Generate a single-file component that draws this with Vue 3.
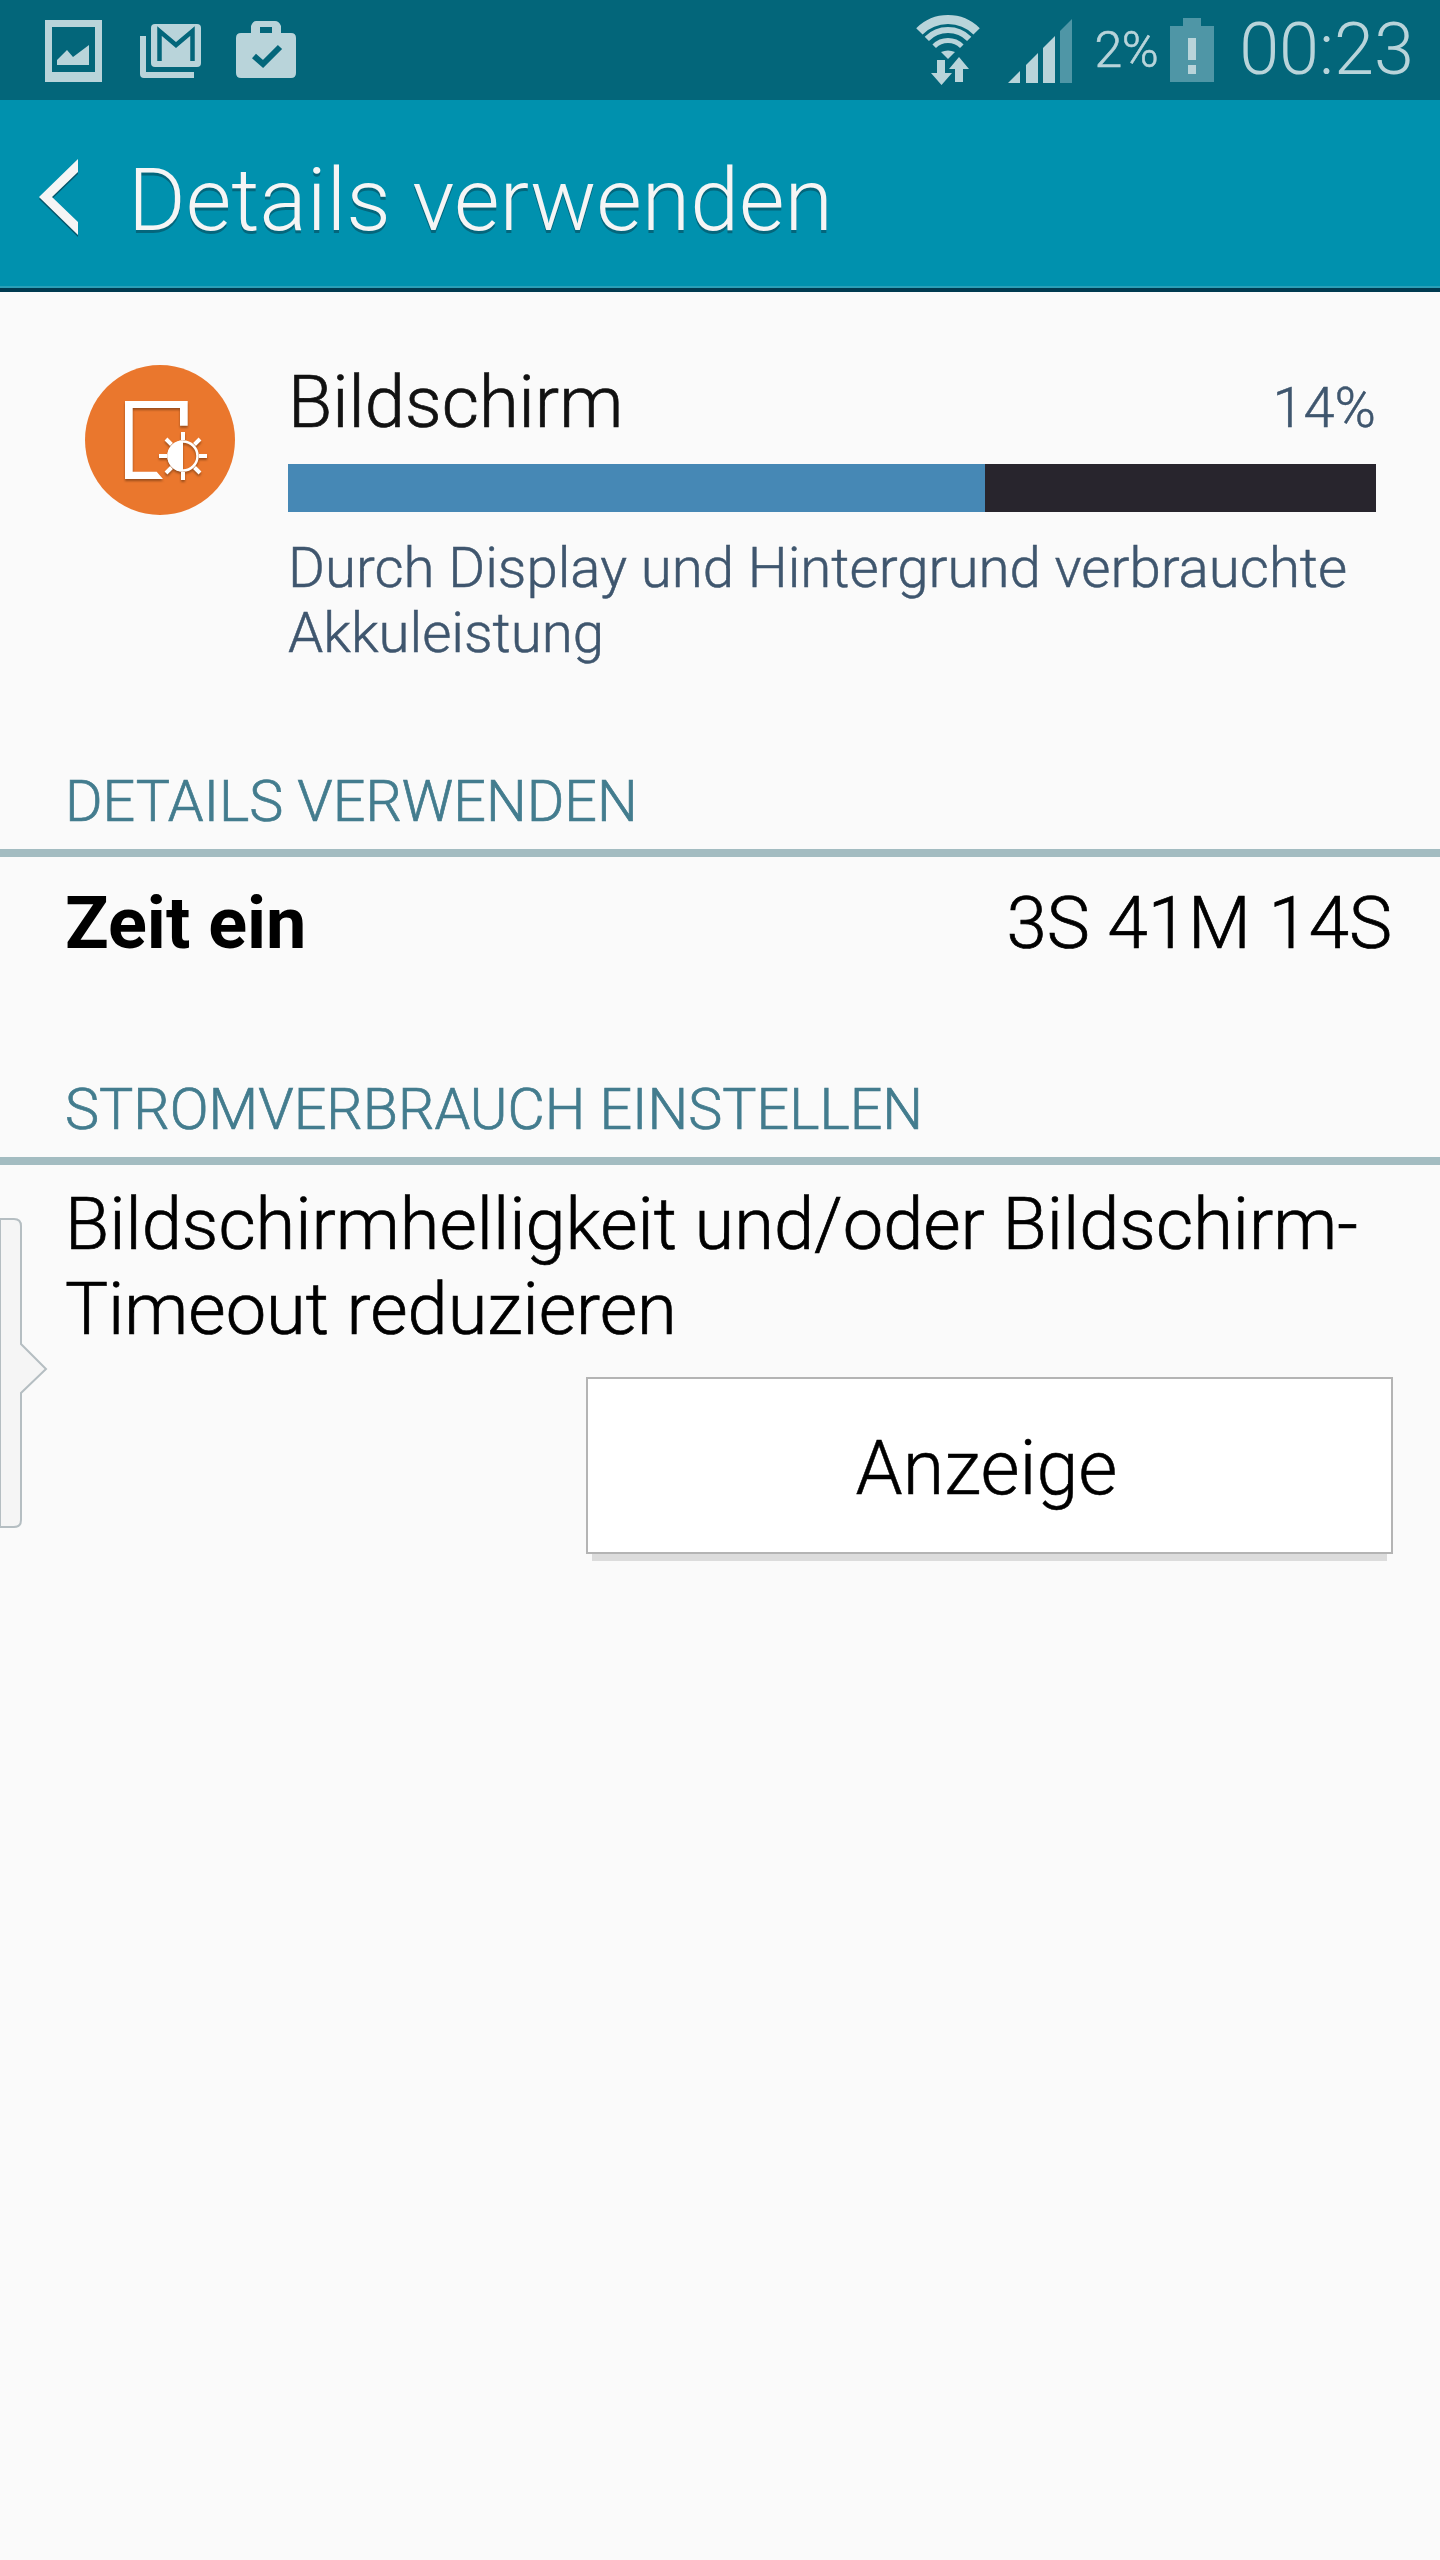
<template>
  <div class="screen">
    <!-- status bar -->
    <header class="statusbar">
      <div class="status-left">
        <svg class="ic" width="57" height="62" viewBox="45 20 57 62">
          <path fill-rule="evenodd" d="M45 20h57v62H45zM52 27v45h43V27z" />
          <path d="M57 60l10-10 6 7 16-12v20H57z" />
        </svg>
        <svg class="ic ic-mail" width="61" height="55" viewBox="140 23 61 55">
          <path d="M140 36h6v36h48v6h-50q-4 0-4-4z" />
          <rect x="151" y="24" width="50" height="43" rx="4" />
          <path class="cut" d="M159.500 61V31l16.500 14 16.500-14v30" />
        </svg>
        <svg class="ic ic-case" width="60" height="58" viewBox="236 21 60 58">
          <path fill-rule="evenodd" d="M256 21h19q4 0 6 5v7h10q5 0 5 5v35q0 5-5 5h-50q-5 0-5-5V38q0-5 5-5h10v-7q2-5 5-5zM260 27v6h12v-6z" />
          <path class="cut" d="M254 56l9 8 17-17" />
        </svg>
      </div>
      <div class="status-right">
        <svg class="ic ic-wifi" width="66" height="71" viewBox="916 15 66 71">
          <path class="arc" stroke-width="9" d="M920.400 31.400a40.500 40.500 0 0 1 57.200 0" />
          <path class="arc" stroke-width="6" d="M927.800 38.800a30 30 0 0 1 42.400 0" />
          <path class="arc" stroke-width="5" d="M935.200 46.200a19.500 19.500 0 0 1 27.600 0" />
          <path d="M942 52q7-3 14 0l-7 7z" />
          <path d="M938 60h8v13h7l-10.500 12L932 73h6z" />
          <path d="M960 57l10 12h-6v13h-8V69h-6z" />
        </svg>
        <svg class="ic ic-signal" width="64" height="64" viewBox="1009 19 64 64">
          <path d="M1009 83l12-12v12z" />
          <path d="M1027 83V65l12-12v30z" />
          <path d="M1044 83V48l12-12v47z" />
          <path class="dim" d="M1061 83V31l12-12v64z" />
        </svg>
        <span class="pct">2%</span>
        <svg class="ic ic-batt" width="44" height="64" viewBox="1171 18 44 64">
          <path class="dim" d="M1184 18h18v8h13v56h-44V26h13z" />
          <path d="M1189 38h8v22h-8zM1189 65h8v9h-8z" />
        </svg>
        <span class="clock">00:23</span>
      </div>
    </header>

    <!-- app bar -->
    <div class="appbar">
      <svg class="back" width="42" height="80" viewBox="0 0 42 80">
        <path d="M40 0v13L14 38l26 25v13L1 38z" />
      </svg>
      <h1 class="appbar-title">Details verwenden</h1>
    </div>

    <main class="content">
      <section class="summary">
        <div class="circle">
          <svg width="150" height="150" viewBox="85 365 150 150">
            <g class="glyph">
              <path d="M125 401h62.700v24.700H180V408h-47.300v63.700h24l6.300 7.300h-38z" />
              <path d="M183 456m0-15.500a15.500 15.500 0 0 0 0 31z" />
              <circle class="ring" cx="183" cy="456" r="14.500" />
              <path class="ray" d="M183 432v8M183 472v8M159 456h8M199 456h8M166 439l5.500 5.500M194.500 467.500l5.500 5.500M200 439l-5.500 5.500M171.500 467.500L166 473" />
            </g>
          </svg>
        </div>
        <div class="summary-body">
          <div class="summary-head">
            <span class="summary-title">Bildschirm</span>
            <span class="summary-pct">14%</span>
          </div>
          <div class="bar"><div class="bar-fill" :style="{ width: usage + '%' }"></div></div>
          <p class="summary-text">Durch Display und Hintergrund verbrauchte Akkuleistung</p>
        </div>
      </section>

      <h2 class="section-title first">DETAILS VERWENDEN</h2>
      <div class="row">
        <span class="row-label">Zeit ein</span>
        <span class="row-value">3S 41M 14S</span>
      </div>

      <h2 class="section-title">STROMVERBRAUCH EINSTELLEN</h2>
      <p class="tip">Bildschirmhelligkeit und/oder Bildschirm-Timeout reduzieren</p>
      <div class="actions">
        <button class="btn">Anzeige</button>
      </div>

      <!-- handle of the edge panel, lies over the page -->
      <svg class="handle" width="50" height="312" viewBox="0 0 50 312">
        <path d="M0 1h14q7 0 7 7v118l25 25-25 24v127q0 7-7 7H0z" />
      </svg>
    </main>
  </div>
</template>

<script setup>
const usage = 64.1
</script>

<style scoped>
.screen {
  width: 1440px;
  height: 2560px;
  background: #fafafa;
  font-family: Roboto, "Liberation Sans", sans-serif;
  font-weight: 300;
  overflow: hidden;
}

.statusbar {
  height: 100px;
  background: #03667a;
  display: flex;
  justify-content: space-between;
  box-sizing: border-box;
  padding: 0 26px 0 45px;
}
.status-left {
  display: flex;
  align-items: flex-start;
}
.status-right {
  display: flex;
  align-items: flex-start;
}
.ic {
  fill: #b9d4da;
  display: block;
  margin-top: 20px;
}
.ic .cut {
  fill: none;
  stroke: #03667a;
  stroke-width: 4.500px;
}
.ic-mail { margin: 23px 0 0 38px; }
.ic-case { margin: 21px 0 0 35px; }
.ic-case .cut { stroke-width: 6px; }
.ic-wifi { margin-top: 15px; }
.ic-wifi .arc { fill: none; stroke: #b9d4da; }
.ic-signal { margin: 19px 0 0 27px; }
.ic .dim { fill: #4f96a6; }
.ic-batt { margin: 18px 0 0 12px; }
.pct {
  font-size: 50px;
  line-height: 100px;
  color: #b9d4da;
  margin-left: 22.500px;
  letter-spacing: -0.5px;
  -webkit-text-stroke: 0.6px #b9d4da;
}
.clock {
  font-size: 72px;
  line-height: 100px;
  color: #b9d4da;
  margin-left: 25px;
}

.appbar {
  height: 186px;
  background: #0091ae;
  border-bottom: 2px solid #2a9fb8;
  box-shadow: 0 4px 0 #003a50;
  margin-bottom: 4px;
  display: flex;
  align-items: center;
  padding-left: 38px;
}
.back {
  fill: #f5f5f5;
  filter: drop-shadow(0 2px 0 #04566b);
  margin-top: 12px;
}
.appbar-title {
  margin: 12px 0 0 48px;
  font-size: 88px;
  font-weight: 300;
  color: #f5f5f5;
  text-shadow: 0 3px 0 #04667c;
}

.content {
  position: relative;
}
.summary {
  display: flex;
  padding: 73px 64px 0 85px;
}
.circle {
  width: 150px;
  height: 150px;
  border-radius: 50%;
  background: #ea772d;
  flex: none;
}
.glyph {
  filter: drop-shadow(0 2px 1px rgba(120, 60, 20, 0.7));
}
.glyph path { fill: #fff; }
.glyph .ring { fill: none; stroke: #fff; stroke-width: 2.500px; }
.glyph .ray { fill: none; stroke: #fff; stroke-width: 4px; }
.summary-body {
  margin-left: 53px;
  flex: 1;
  margin-top: -13px;
}
.summary-head {
  display: flex;
  justify-content: space-between;
  align-items: baseline;
  height: 112px;
  line-height: 102px;
}
.summary-title {
  font-size: 72.300px;
  color: #111;
  -webkit-text-stroke: 0.7px #111;
}
.summary-pct {
  font-size: 56px;
  color: #3f566e;
  -webkit-text-stroke: 0.5px #3f566e;
}
.bar {
  height: 48px;
  background: #28252d;
}
.bar-fill {
  height: 100%;
  background: #4688b5;
}
.summary-text {
  margin: 24px 0 0;
  font-size: 56.400px;
  line-height: 65px;
  color: #3f566e;
  -webkit-text-stroke: 0.5px #3f566e;
}

.section-title {
  margin: 0;
  font-size: 57.400px;
  font-weight: 300;
  line-height: 70px;
  color: #437c8e;
  padding: 0 65px 12px;
  border-bottom: 8px solid #a3bcc1;
  -webkit-text-stroke: 0.7px #437c8e;
}
.section-title.first { margin-top: 101px; }

.row {
  display: flex;
  justify-content: space-between;
  height: 218px;
  padding: 0 48px 0 65px;
  line-height: 134px;
}
.row-label {
  font-size: 72px;
  font-weight: 700;
  color: #000;
}
.row-value {
  font-size: 72.600px;
  color: #000;
  -webkit-text-stroke: 0.7px #000;
}

.tip {
  margin: 17px 0 0;
  padding: 0 50px 0 65px;
  font-size: 72.200px;
  line-height: 85px;
  color: #000;
  -webkit-text-stroke: 0.7px #000;
}
.actions {
  display: flex;
  justify-content: flex-end;
  padding-right: 47px;
  margin-top: 25px;
}
.btn {
  width: 807px;
  height: 177px;
  box-sizing: border-box;
  background: #fff;
  border: 2px solid #b4b4b4;
  border-radius: 0;
  box-shadow: 0 13px 0 -6px #dcdcdc;
  font-family: inherit;
  font-size: 75.500px;
  font-weight: 300;
  color: #000;
  padding: 5px 6px 0 0;
  -webkit-text-stroke: 0.5px #000;
}
.handle {
  position: absolute;
  left: 0;
  top: 926px;
  fill: #f5f5f5;
  stroke: #b5bec2;
  stroke-width: 2px;
}
</style>

<style>
body {
  margin: 0;
  background: #fafafa;
}
</style>
